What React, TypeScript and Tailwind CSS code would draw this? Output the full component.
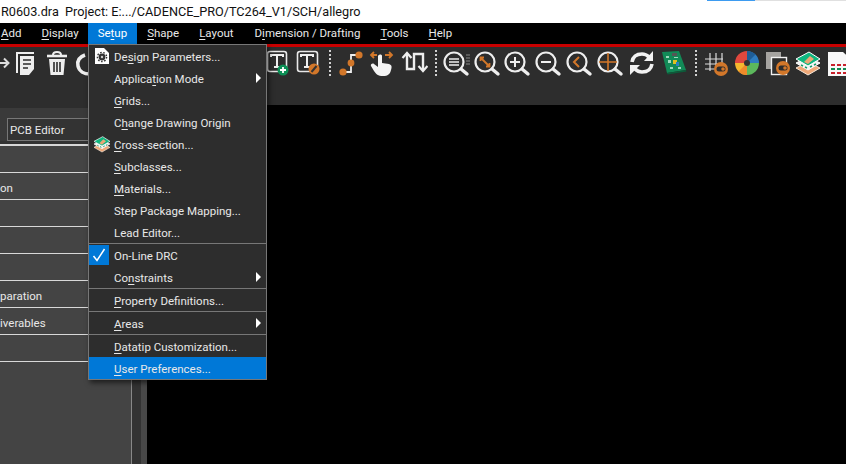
import type { ReactNode } from 'react'

const ORANGE = '#d2772a'

function Mn({ children }: { children: ReactNode }) {
  return <span className="underline underline-offset-2 decoration-1">{children}</span>
}

function Ico({ className = '', w = 30, children }: { className?: string; w?: number; children: ReactNode }) {
  return (
    <svg width={w} height={30} viewBox={`0 0 ${w} 30`} fill="none" className={`shrink-0 ${className}`}>
      {children}
    </svg>
  )
}

function Dots({ className = '' }: { className?: string }) {
  return <div className={`w-[2px] h-[26px] mt-[2px] shrink-0 border-l-2 border-dotted border-[#d0d0d0] ${className}`} />
}

// magnifier base shared by all zoom buttons
function Zoom({ className = '', children }: { className?: string; children?: ReactNode }) {
  return (
    <Ico className={className}>
      <circle cx="13" cy="14" r="9.5" stroke="#eee" strokeWidth="2.2" />
      <path d="M20 21l6 5" stroke="#eee" strokeWidth="3.4" strokeLinecap="round" />
      {children}
    </Ico>
  )
}

function LayersIcon({ size = 30 }: { size?: number }) {
  return (
    <svg width={size} height={size} viewBox="0 0 30 30" fill="none" className="shrink-0">
      <path d="M3 20l12-6 12 6-12 7z" fill="#efa878" stroke="#f5e6d8" strokeWidth="1" />
      <path d="M3 15l12-6 12 6-12 7z" fill="#f3f3f3" stroke="#fff" strokeWidth="1" />
      <path d="M3 11l13-7 11 7-12 7z" fill="#0fb67f" stroke="#fff" strokeWidth="1" />
      <path d="M11 14l6-6 4 3-6 5z" fill="#e9a777" />
      <path d="M8 17l2 1M12 19l2 1M17 19l2-1M21 17l2-1" stroke="#1a9a66" strokeWidth="1.5" />
    </svg>
  )
}

function GearDoc() {
  return (
    <svg width="16" height="18" viewBox="0 0 16 18" className="shrink-0">
      <path d="M1 1h9l5 5v11H1z" fill="#fff" />
      <circle cx="8" cy="10" r="3.4" fill="#333" />
      <circle cx="8" cy="10" r="4.6" fill="none" stroke="#333" strokeWidth="1.4" strokeDasharray="1.6 1.6" />
      <circle cx="8" cy="10" r="1.2" fill="#ccc" />
    </svg>
  )
}

function Toolbar() {
  return (
    <div className="h-[58px] bg-[#2d2d2d] flex items-start pt-[1px] shrink-0">
      <Ico w={10}>
        <path d="M0 15h7M4 10.5l4.5 4.5L4 19.5" stroke="#ddd" strokeWidth="2" />
      </Ico>
      {/* document */}
      <Ico>
        <path d="M7 25V5h17" stroke="#eee" strokeWidth="2" />
        <path d="M10 8h14v13l-5 6h-9z" fill="#eee" />
        <path d="M13 12h8M13 16h8M13 20h5" stroke="#2d2d2d" strokeWidth="1.6" />
      </Ico>
      {/* trash */}
      <Ico className="ml-[2px]">
        <path d="M5 8h20" stroke="#eee" strokeWidth="2.6" />
        <path d="M11 7c0-4 8-4 8 0" stroke="#eee" strokeWidth="2" />
        <path d="M7 11h16l-1.5 16h-13z" fill="#eee" />
        <path d="M12 14v10M15 14v10M18 14v10" stroke="#2d2d2d" strokeWidth="1.6" />
      </Ico>
      {/* arc, mostly hidden by the open menu */}
      <Ico className="ml-0">
        <path d="M13 7C7 9 5 13 6 18c1 5 6 8 12 8" stroke="#eee" strokeWidth="3.6" />
      </Ico>
      {/* text add */}
      <Ico className="ml-[160px]">
        <rect x="5.5" y="3.5" width="19" height="20" rx="2.5" stroke="#e8e8e8" strokeWidth="1.6" />
        <path d="M9 9V7h12v2M15 7v12M12 19h6" stroke="#eee" strokeWidth="2" />
        <circle cx="21" cy="22" r="5.5" fill="#0b8f55" />
        <path d="M18 22h6M21 19v6" stroke="#fff" strokeWidth="1.8" />
      </Ico>
      {/* text edit */}
      <Ico className="ml-[1px]">
        <rect x="4.5" y="3.5" width="20" height="20" rx="2.5" stroke="#e8e8e8" strokeWidth="1.6" />
        <path d="M8 9V7h12v2M14 7v12M11 19h6" stroke="#eee" strokeWidth="2" />
        <circle cx="21" cy="21" r="5.5" fill={ORANGE} />
        <path d="M18.5 24l5-6" stroke="#333" strokeWidth="2" />
      </Ico>
      <Dots className="ml-[6px]" />
      {/* route */}
      <Ico className="ml-[4px]">
        <path d="M8 24h8V7h8" stroke="#eee" strokeWidth="1.8" />
        <circle cx="8" cy="24" r="3.6" fill={ORANGE} />
        <circle cx="16" cy="15" r="3.4" fill={ORANGE} />
        <circle cx="24" cy="7" r="3.6" fill={ORANGE} />
      </Ico>
      {/* hand */}
      <Ico className="ml-[1px]">
        <path d="M5 7h6M8 4l-3 3 3 3M19 7h7M23 4l3 3-3 3" stroke={ORANGE} strokeWidth="1.8" />
        <path d="M12 8c1-2 4-2 4 0v7l7 1c3 1 3 3 2 6-1 4-3 6-8 6-5 0-7-2-9-5l-3-5c-1-2 2-3 3-2l4 3z" fill="#f4f4f4" />
      </Ico>
      {/* up down */}
      <Ico className="ml-[2px]">
        <path d="M9 6v15h7V6h9v16" stroke="#eee" strokeWidth="2.4" />
        <path d="M4.5 10L9 5l4.500 5M20.500 18l4.500 5 4.500-5" stroke="#eee" strokeWidth="2.2" />
      </Ico>
      <Dots className="ml-[7px]" />
      <Zoom className="ml-[4px]">
        <path d="M8 11h10M8 14h10M8 17h10" stroke="#eee" strokeWidth="1.6" />
        <path d="M25 7h4M25 10h4M25 13h4M25 16h4" stroke="#888" strokeWidth="1" />
      </Zoom>
      <Zoom className="ml-[1px]">
        <path d="M8.500 9.500l9 9M8.500 13V9.500H12M17.500 15v3.500H14" stroke={ORANGE} strokeWidth="1.8" />
      </Zoom>
      <Zoom>
        <path d="M8 14h10M13 9v10" stroke="#eee" strokeWidth="2" />
      </Zoom>
      <Zoom className="ml-[1px]">
        <path d="M8 14h10" stroke="#eee" strokeWidth="2" />
      </Zoom>
      <Zoom className="ml-[1px]">
        <path d="M15 9l-5 5 5 5" stroke={ORANGE} strokeWidth="2" />
      </Zoom>
      <Zoom className="ml-[1px]">
        <path d="M13 5v18M4 14h18" stroke={ORANGE} strokeWidth="1.600" />
      </Zoom>
      {/* refresh */}
      <Ico className="ml-[2px]">
        <path d="M5 14C6 8 10 6 15 6c3 0 5 1 7 3" stroke="#f2f2f2" strokeWidth="3.600" />
        <path d="M26 3v10H17z" fill="#f2f2f2" />
        <path d="M25 16c-1 6-5 8-10 8-3 0-5-1-7-3" stroke="#f2f2f2" strokeWidth="3.600" />
        <path d="M3 27V17h10z" fill="#f2f2f2" />
      </Ico>
      {/* board */}
      <Ico className="ml-[5px]">
        <path d="M0 4l17-1 7 19-19 3z" fill="#128a57" />
        <path d="M5 25l19-3 .5 1.500L5.500 26.500z" fill="#0c5c3a" />
        <rect x="11" y="12" width="4" height="4" fill="#e0c020" />
        <rect x="14" y="14" width="3" height="4" fill="#2a80c0" />
        <rect x="10" y="5" width="5" height="3" fill="#555" />
        <path d="M4 8h3v2H4zM6 12h3v3H6zM8 19h3v2H8zM16 19h3v2h-3zM12 9h4v1h-4z" fill="#9fd8bd" />
      </Ico>
      <Dots className="ml-[3px]" />
      {/* grid toggle */}
      <Ico className="ml-[3px]">
        <path d="M5 11h18M5 16h18M5 21h12M10 5v18M16 5v18M22 5v10" stroke="#ddd" strokeWidth="1.200" />
        <circle cx="21" cy="21" r="7" fill={ORANGE} />
        <rect x="16.500" y="18.500" width="9" height="5" rx="2.500" fill="#2d2d2d" />
        <circle cx="23" cy="21" r="1.800" fill={ORANGE} />
      </Ico>
      {/* colour wheel */}
      <Ico className="ml-[2px]">
        <circle cx="15" cy="15" r="12" fill="#2d2d2d" />
        <path d="M15 3A12 12 0 0 1 27 15H15z" fill="#2e7cc0" />
        <path d="M27 15A12 12 0 0 1 15 27V15z" fill="#5cb85c" />
        <path d="M15 27A12 12 0 0 1 3 15H15z" fill="#f5b82e" />
        <path d="M3 15A12 12 0 0 1 15 3V15z" fill="#e0483e" />
        <path d="M15 3A12 12 0 0 1 23.500 6.500L15 15z" fill="#1f5d96" />
        <path d="M15 27A12 12 0 0 1 6.500 23.500L15 15z" fill="#ef8a2a" />
        <circle cx="15" cy="15" r="3" fill="#333" />
      </Ico>
      {/* window toggle */}
      <Ico className="ml-[1px]">
        <rect x="3" y="4" width="15" height="17" fill="#a5a3a0" />
        <rect x="8.500" y="9.500" width="15" height="17" fill="#2d2d2d" stroke="#f0f0f0" strokeWidth="1.400" />
        <circle cx="20" cy="20" r="7" fill={ORANGE} />
        <rect x="15.500" y="17.500" width="9" height="5" rx="2.500" fill="#2d2d2d" />
        <circle cx="22" cy="20" r="1.800" fill={ORANGE} />
      </Ico>
      <LayersIcon />
      {/* sheet */}
      <Ico>
        <path d="M5 4h15l8 7v17H5z" fill="#f8f8f8" />
        <path d="M8 16h4v2H8zM14 16h4v2h-4zM20 16h4v2h-4zM8 24h4v2H8zM14 24h4v2h-4zM20 24h4v2h-4z" fill="#c8202a" />
        <path d="M8 20h4v2H8zM14 20h4v2h-4zM20 20h4v2h-4z" fill="#108a50" />
      </Ico>
    </div>
  )
}

function Item({ children, icon, arrow, active }: { children: ReactNode; icon?: ReactNode; arrow?: boolean; active?: boolean }) {
  return (
    <div className={`h-[22px] flex items-center relative ${active ? 'bg-[#0078d7]' : ''}`}>
      <div className="w-[25px] flex justify-center shrink-0">{icon}</div>
      <span className="whitespace-nowrap pt-[4px]">{children}</span>
      {arrow && (
        <span className="absolute right-[5px] top-[6px] w-0 h-0 border-y-[5px] border-y-transparent border-l-[5px] border-l-white" />
      )}
    </div>
  )
}

function SetupMenu() {
  return (
    <div className="absolute left-[88px] top-[44px] w-[179px] h-[336px] bg-[#2d2d2d] border border-[#777] shadow-[2px_3px_5px_rgba(0,0,0,0.55)] text-[#e8e8e8] text-[11.5px]">
      <Item icon={<GearDoc />}>De<Mn>s</Mn>ign Parameters...</Item>
      <Item arrow>Applica<Mn>t</Mn>ion Mode</Item>
      <Item><Mn>G</Mn>rids...</Item>
      <Item>C<Mn>h</Mn>ange Drawing Origin</Item>
      <Item icon={<LayersIcon size={20} />}><Mn>C</Mn>ross-section...</Item>
      <Item><Mn>S</Mn>ubclasses...</Item>
      <Item><Mn>M</Mn>aterials...</Item>
      <Item>Step Package Mapping...</Item>
      <Item>Lead Editor...</Item>
      <div className="h-[1px] bg-[#777]" />
      <Item
        icon={
          <div className="w-[20px] h-[20px] -ml-[5px] bg-[#0078d7] flex items-center justify-center">
            <svg width="14" height="14" viewBox="0 0 14 14" fill="none">
              <path d="M1.500 8l3.500 4.500L12.500 1" stroke="#fff" strokeWidth="1.500" />
            </svg>
          </div>
        }
      >
        On-Line DRC
      </Item>
      <Item arrow>Co<Mn>n</Mn>straints</Item>
      <div className="h-[1px] bg-[#777]" />
      <Item><Mn>P</Mn>roperty Definitions...</Item>
      <div className="h-[1px] bg-[#777]" />
      <Item arrow><Mn>A</Mn>reas</Item>
      <div className="h-[1px] bg-[#777]" />
      <Item><Mn>D</Mn>atatip Customization...</Item>
      <Item active><Mn>U</Mn>ser Preferences...</Item>
    </div>
  )
}

function PanelRow({ children }: { children?: ReactNode }) {
  return (
    <div className="h-[27px] border-b border-[#d8d8d8] flex items-center pt-[5px] text-[11.5px] text-[#e8e8e8] whitespace-nowrap">
      {children}
    </div>
  )
}

export default function App() {
  return (
    <div className="relative w-[846px] h-[464px] overflow-hidden flex flex-col bg-black font-['Roboto',sans-serif]">
      {/* title bar */}
      <div className="relative h-[23px] bg-white text-[#111] text-[12.7px] pl-[1px] flex items-center whitespace-pre shrink-0">
        R0603.dra{'  '}Project: E:.../CADENCE_PRO/TC264_V1/SCH/allegro
        <div className="absolute left-[707px] top-0 w-[48px] h-[1px] bg-[#3d9bf0]" />
        <div className="absolute left-[755px] top-0 w-[91px] h-[1px] bg-[#e0e0e0]" />
      </div>

      {/* menu bar */}
      <div className="h-[21px] bg-black text-[#e8e8e8] text-[11.5px] flex items-center shrink-0 whitespace-nowrap">
        <span className="pl-[1px] pr-[10px]"><Mn>A</Mn>dd</span>
        <span className="pl-[10px] pr-[9px]"><Mn>D</Mn>isplay</span>
        <span className="h-full px-[10px] flex items-center bg-[#0078d7] text-white">
          <span>Se<Mn>t</Mn>up</span>
        </span>
        <span className="px-[10px]"><Mn>S</Mn>hape</span>
        <span className="pl-[10px] pr-[11px]"><Mn>L</Mn>ayout</span>
        <span className="px-[10px]">D<Mn>i</Mn>mension / Drafting</span>
        <span className="px-[10px]"><Mn>T</Mn>ools</span>
        <span className="px-[10px]"><Mn>H</Mn>elp</span>
      </div>
      <div className="h-[3px] bg-[#c80000] shrink-0" />

      <Toolbar />

      <div className="flex-1 flex min-h-0">
        {/* left panel */}
        <div className="w-[131px] bg-[#444] flex flex-col shrink-0">
          <div className="h-[3px] bg-[#2d2d2d]" />
          <div className="h-[23px] bg-[#3a3a3a] flex items-center pl-[73px]">
            <div className="w-[10px] h-[2px] bg-[#ddd]" />
          </div>
          <div className="h-[15px] bg-[#3a3a3a]" />
        </div>
        <div className="w-[1px] bg-[#888] shrink-0" />
        <div className="w-[9px] bg-[#333] shrink-0" />
        <div className="w-[6px] bg-[#484848] shrink-0" />
        <div className="flex-1 bg-black" />
      </div>

      {/* panel content that sits below the header */}
      <div className="absolute left-0 top-[118px] w-[131px]">
        <div className="ml-[7px] h-[23px] bg-[#333] border border-[#777] pl-[2px] pt-[2px] flex items-center text-[11.5px] text-[#e8e8e8]">
          PCB Editor
        </div>
        <div className="h-[5px] border-b-2 border-[#d8d8d8] bg-[#333]" />
        <PanelRow />
        <PanelRow>on</PanelRow>
        <PanelRow />
        <PanelRow />
        <PanelRow />
        <PanelRow>paration</PanelRow>
        <PanelRow>iverables</PanelRow>
        <PanelRow />
      </div>

      <SetupMenu />
    </div>
  )
}
